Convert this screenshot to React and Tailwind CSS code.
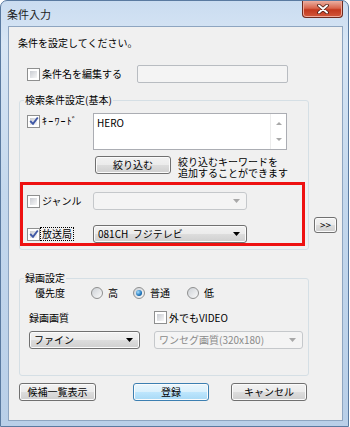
import React from 'react';

const Check = ({ checked }) => (
  <span className="flex h-[13px] w-[13px] shrink-0 border border-[#8e8f8f] bg-white p-[2px]">
    <span className="relative h-full w-full bg-gradient-to-br from-[#c9ccd2] to-[#f7f7f7]">
      {checked && (
        <svg className="absolute -left-[1px] -top-[2px]" width="10" height="10" viewBox="0 0 10 10">
          <path d="M1.2 5 L4 7.8 L8.8 1.5" fill="none" stroke="#3f58a6" strokeWidth="1.9" />
        </svg>
      )}
    </span>
  </span>
);

const Radio = ({ checked }) => (
  <span className="flex h-[12px] w-[12px] shrink-0 items-center justify-center rounded-full border border-[#8e8f8f] bg-gradient-to-br from-[#cdd1d6] to-[#fafafa]">
    {checked && (
      <span className="h-[6px] w-[6px] rounded-full bg-[radial-gradient(circle_at_35%_35%,#a8e0ff,#1d74bb_60%,#0c3e72)]" />
    )}
  </span>
);

const Btn = ({ className, children, primary }) => (
  <div
    className={`flex shrink-0 items-center justify-center rounded-[3px] border shadow-[inset_0_0_0_1px_#fbfbfb] ${
      primary
        ? 'border-[#3c7fb1] bg-[linear-gradient(#eaf6fd_0%,#d9f0fc_50%,#bee6fd_50%,#a7d9f5_100%)]'
        : 'border-[#707070] bg-[linear-gradient(#f2f2f2_0%,#ebebeb_50%,#dddddd_50%,#cfcfcf_100%)]'
    } ${className}`}
  >
    {children}
  </div>
);

const Select = ({ className, children, disabled }) => (
  <div
    className={`flex shrink-0 items-center justify-between rounded-[3px] border pl-[4px] pr-[6px] ${
      disabled
        ? 'border-[#c5c8cb] bg-[#f4f4f4] text-[#8a8a8a]'
        : 'border-[#707070] bg-[linear-gradient(#f2f2f2_0%,#ebebeb_50%,#dddddd_50%,#cfcfcf_100%)] text-black shadow-[inset_0_0_0_1px_#fbfbfb]'
    } ${className}`}
  >
    <span className="whitespace-pre">{children}</span>
    <svg width="7" height="4" viewBox="0 0 7 4">
      <path d="M0 0h7L3.5 4z" fill={disabled ? '#a8a8a8' : '#000'} />
    </svg>
  </div>
);

export default function App() {
  return (
    <div className="flex h-[427px] w-[349px] flex-col rounded-t-[7px] border border-[#5a7aa0] bg-[linear-gradient(180deg,#cadcf0_0%,#d8e6f5_10%,#c4d8ed_45%,#b9cfe8_100%)] pb-[5px] pl-[7px] pr-[5px] font-['Noto_Sans_CJK_JP',sans-serif] text-[10px] leading-[14px] text-black">
      <div className="flex h-[25px] shrink-0 items-start justify-between">
        <span className="-ml-[1px] self-center text-[11px] text-[#1c1c1c]">条件入力</span>
        <div className="flex h-[17px] w-[41px] items-center justify-center rounded-b-[4px] border border-t-0 border-[#6e2a1e] bg-[linear-gradient(#eab0a2_0%,#d9654c_45%,#c3381d_55%,#d2573a_100%)] shadow-[inset_0_0_0_1px_#f0a898]">
          <svg width="12" height="10" viewBox="0 0 12 10">
            <path d="M2 1.5 L10 8.5 M10 1.5 L2 8.5" stroke="#4a1a12" strokeWidth="3.6" strokeLinecap="round" />
            <path d="M2 1.5 L10 8.5 M10 1.5 L2 8.5" stroke="#ffffff" strokeWidth="2" strokeLinecap="round" />
          </svg>
        </div>
      </div>

      <div className="flex flex-1 flex-col border border-[#8ea5c0] bg-[#f0f0f0]">
        <p className="ml-[9px] mt-[9px] h-[14px]">条件を設定してください。</p>

        <div className="ml-[18px] mt-[15px] flex h-[18px] items-center">
          <label className="flex w-[110px] items-center gap-[2px]">
            <Check />
            <span>条件名を編集する</span>
          </label>
          <div className="h-[18px] w-[151px] rounded-[2px] border border-[#b8bcc1] bg-[#f4f4f4]" />
        </div>

        <div className="ml-[10px] mt-[10px] flex items-end">
          <fieldset className="w-[290px] shrink-0 rounded-[3px] border border-[#d5dfe5] pb-[3px]">
            <legend className="ml-[4px] px-[1px] leading-[14px]">検索条件設定(基本)</legend>

            <div className="mt-[6px] flex items-start">
              <label className="ml-[7px] mt-[1px] flex w-[66px] items-center gap-[2px]">
                <Check checked />
                <span className="tracking-[1.2px]">ｷｰﾜｰﾄﾞ</span>
              </label>
              <div className="flex h-[37px] w-[194px] border border-[#abadb3] bg-white">
                <span className="flex-1 pl-[3px] pt-[2px]">HERO</span>
                <div className="flex w-[16px] flex-col items-center justify-between border-l border-[#ececec] py-[8px]">
                  <svg width="6" height="3" viewBox="0 0 6 3">
                    <path d="M0 3h6L3 0z" fill="#a8a8a8" />
                  </svg>
                  <svg width="6" height="3" viewBox="0 0 6 3">
                    <path d="M0 0h6L3 3z" fill="#a8a8a8" />
                  </svg>
                </div>
              </div>
            </div>

            <div className="mt-[6px] flex items-start">
              <Btn className="ml-[75px] h-[18px] w-[76px]">絞り込む</Btn>
              <div className="ml-[7px] flex flex-col">
                <span className="h-[11px] leading-[11px]">絞り込むキーワードを</span>
                <span className="h-[11px] leading-[11px]">追加することができます</span>
              </div>
            </div>

            <div className="mt-[4px] w-[285px] border-[3px] border-[#ee1111] pl-[4px] pt-[7px]">
              <div className="flex h-[18px] items-center">
                <label className="flex w-[66px] items-center gap-[2px]">
                  <Check />
                  <span>ジャンル</span>
                </label>
                <Select disabled className="h-[18px] w-[154px]" />
              </div>
              <div className="mt-[15px] flex h-[18px] items-center">
                <label className="flex w-[66px] items-center">
                  <Check checked />
                  <span className="border border-dotted border-black px-[1px] leading-[12px]">放送局</span>
                </label>
                <Select className="h-[18px] w-[154px]">{'081CH  フジテレビ'}</Select>
              </div>
            </div>
          </fieldset>
          <Btn className="mb-[17px] ml-[5px] h-[16px] w-[23px] leading-[10px]">&gt;&gt;</Btn>
        </div>

        <fieldset className="ml-[10px] mt-[21px] w-[290px] rounded-[3px] border border-[#d5dfe5] pb-[26px]">
          <legend className="ml-[4px] px-[1px] leading-[14px]">録画設定</legend>
          <div className="mt-[1px] flex h-[14px] items-center">
            <span className="ml-[15px] w-[56px]">優先度</span>
            <label className="flex w-[42px] items-center gap-[5px]">
              <Radio />
              <span>高</span>
            </label>
            <label className="flex w-[54px] items-center gap-[5px]">
              <Radio checked />
              <span>普通</span>
            </label>
            <label className="flex items-center gap-[5px]">
              <Radio />
              <span>低</span>
            </label>
          </div>
          <div className="mt-[11px] flex h-[13px] items-center">
            <span className="ml-[9px] w-[125px]">録画画質</span>
            <label className="flex items-center gap-[2px]">
              <Check />
              <span>外でもVIDEO</span>
            </label>
          </div>
          <div className="mt-[7px] flex">
            <Select className="ml-[9px] h-[18px] w-[111px]">ファイン</Select>
            <Select disabled className="ml-[14px] h-[18px] w-[149px]">ワンセグ画質(320x180)</Select>
          </div>
        </fieldset>

        <div className="ml-[10px] mt-[7px] flex">
          <Btn className="h-[18px] w-[77px]">候補一覧表示</Btn>
          <Btn primary className="ml-[37px] h-[18px] w-[76px]">登録</Btn>
          <Btn className="ml-[22px] h-[18px] w-[76px]">キャンセル</Btn>
        </div>
      </div>
    </div>
  );
}
